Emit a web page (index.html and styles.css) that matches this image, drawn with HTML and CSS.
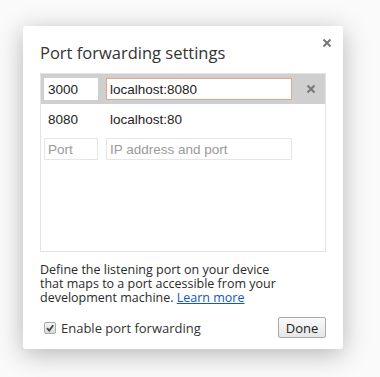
FILE: index.html
```html
<!DOCTYPE html>
<html lang="en">
<head>
    <meta charset="UTF-8">
    <title>Port forwarding settings</title>
    <link rel="stylesheet" href="styles.css">
</head>
<body>
    <div class="dialog">
        <button class="close-btn" title="Close">
            <svg width="10" height="10" viewBox="0 0 10 10"><path d="M1.5 1.5 L8.5 8.5 M8.5 1.5 L1.5 8.5" stroke="#777" stroke-width="2"/></svg>
        </button>
        <h1>Port forwarding settings</h1>

        <div class="rule-list">
            <div class="rule selected">
                <input class="port" type="text" value="3000">
                <input class="address focused" type="text" value="localhost:8080">
                <span class="remove">
                    <svg width="10" height="10" viewBox="0 0 10 10"><path d="M1.5 1.5 L8.5 8.5 M8.5 1.5 L1.5 8.5" stroke="#777" stroke-width="2"/></svg>
                </span>
            </div>
            <div class="rule">
                <span class="port-text">8080</span>
                <span class="address-text">localhost:80</span>
            </div>
            <div class="rule">
                <input class="port empty" type="text" placeholder="Port">
                <input class="address empty" type="text" placeholder="IP address and port">
            </div>
        </div>

        <p class="help">Define the listening port on your device that maps to a port accessible from your development machine. <a href="#">Learn more</a></p>

        <div class="footer">
            <label class="check">
                <span class="box">
                    <svg width="10" height="10" viewBox="0 0 10 10"><path d="M2 5.2 L4.2 7.5 L8.2 2.3" stroke="#444" stroke-width="1.8" fill="none"/></svg>
                </span>
                Enable port forwarding
            </label>
            <button class="done">Done</button>
        </div>
    </div>
</body>
</html>
```

FILE: styles.css
```css
body {
    margin: 0;
    padding: 26px 0 28px 23px;
    background: #fafafa;
    font-family: 'Open Sans', sans-serif;
    color: #333;
}

.dialog {
    position: relative;
    box-sizing: border-box;
    width: 320px;
    height: 323px;
    padding: 17px 17px 12px;
    background: #fff;
    border-radius: 3px;
    box-shadow: 0 5px 26px rgba(0, 0, 0, 0.28);
}

.close-btn {
    position: absolute;
    top: 10px;
    right: 9px;
    width: 14px;
    height: 14px;
    padding: 0;
    border: none;
    background: none;
    display: flex;
    align-items: center;
    justify-content: center;
}

h1 {
    margin: 0 0 10px;
    font-size: 16.5px;
    font-weight: normal;
    line-height: 20px;
    color: #333;
}

.rule-list {
    height: 179px;
    box-sizing: border-box;
    border: 1px solid #e3e3e3;
}

.rule {
    display: flex;
    align-items: center;
    height: 30px;
    padding: 0 3px;
    font-family: 'Liberation Sans', Arial, sans-serif;
    font-size: 13.5px;
    color: #222;
}

.rule.selected {
    height: 30px;
    background: #cfcfcf;
}

.rule input {
    box-sizing: border-box;
    height: 22px;
    padding: 0 3px;
    border: 1px solid #e6e6e6;
    background: #fff;
    font: inherit;
    color: #222;
    outline: none;
}

.rule input::placeholder {
    color: #9a9a9a;
}

.port {
    width: 54px;
}

.address {
    width: 186px;
    margin-left: 8px;
}

.rule.selected .port {
    border-color: #fff;
}

.address.focused {
    border-color: #e2a78a;
}

.port-text {
    width: 50px;
    padding-left: 4px;
}

.address-text {
    padding-left: 12px;
}

.remove {
    display: flex;
    margin-left: 14px;
}

.help {
    margin: 11px 0 0;
    font-size: 12.5px;
    line-height: 14px;
    color: #2a2a2a;
    padding-right: 40px;
}

.help a {
    display: inline-block;
    line-height: 14px;
    color: #15c;
}

.footer {
    display: flex;
    justify-content: space-between;
    align-items: center;
    margin-top: 12px;
    padding-left: 4px;
}

.check {
    display: flex;
    align-items: center;
    gap: 5px;
    font-size: 13px;
    color: #333;
}

.box {
    box-sizing: border-box;
    width: 12px;
    height: 12px;
    border: 1px solid #a8a8a8;
    border-radius: 2px;
    background: linear-gradient(#f4f4f4, #dcdcdc);
    display: flex;
    align-items: center;
    justify-content: center;
}

.done {
    box-sizing: border-box;
    height: 21px;
    width: 48px;
    padding: 0;
    border: 1px solid #a9a9a9;
    border-radius: 2px;
    background: linear-gradient(#fafafa, #e6e6e6);
    font-family: 'Open Sans', sans-serif;
    font-size: 13px;
    color: #222;
}
```
